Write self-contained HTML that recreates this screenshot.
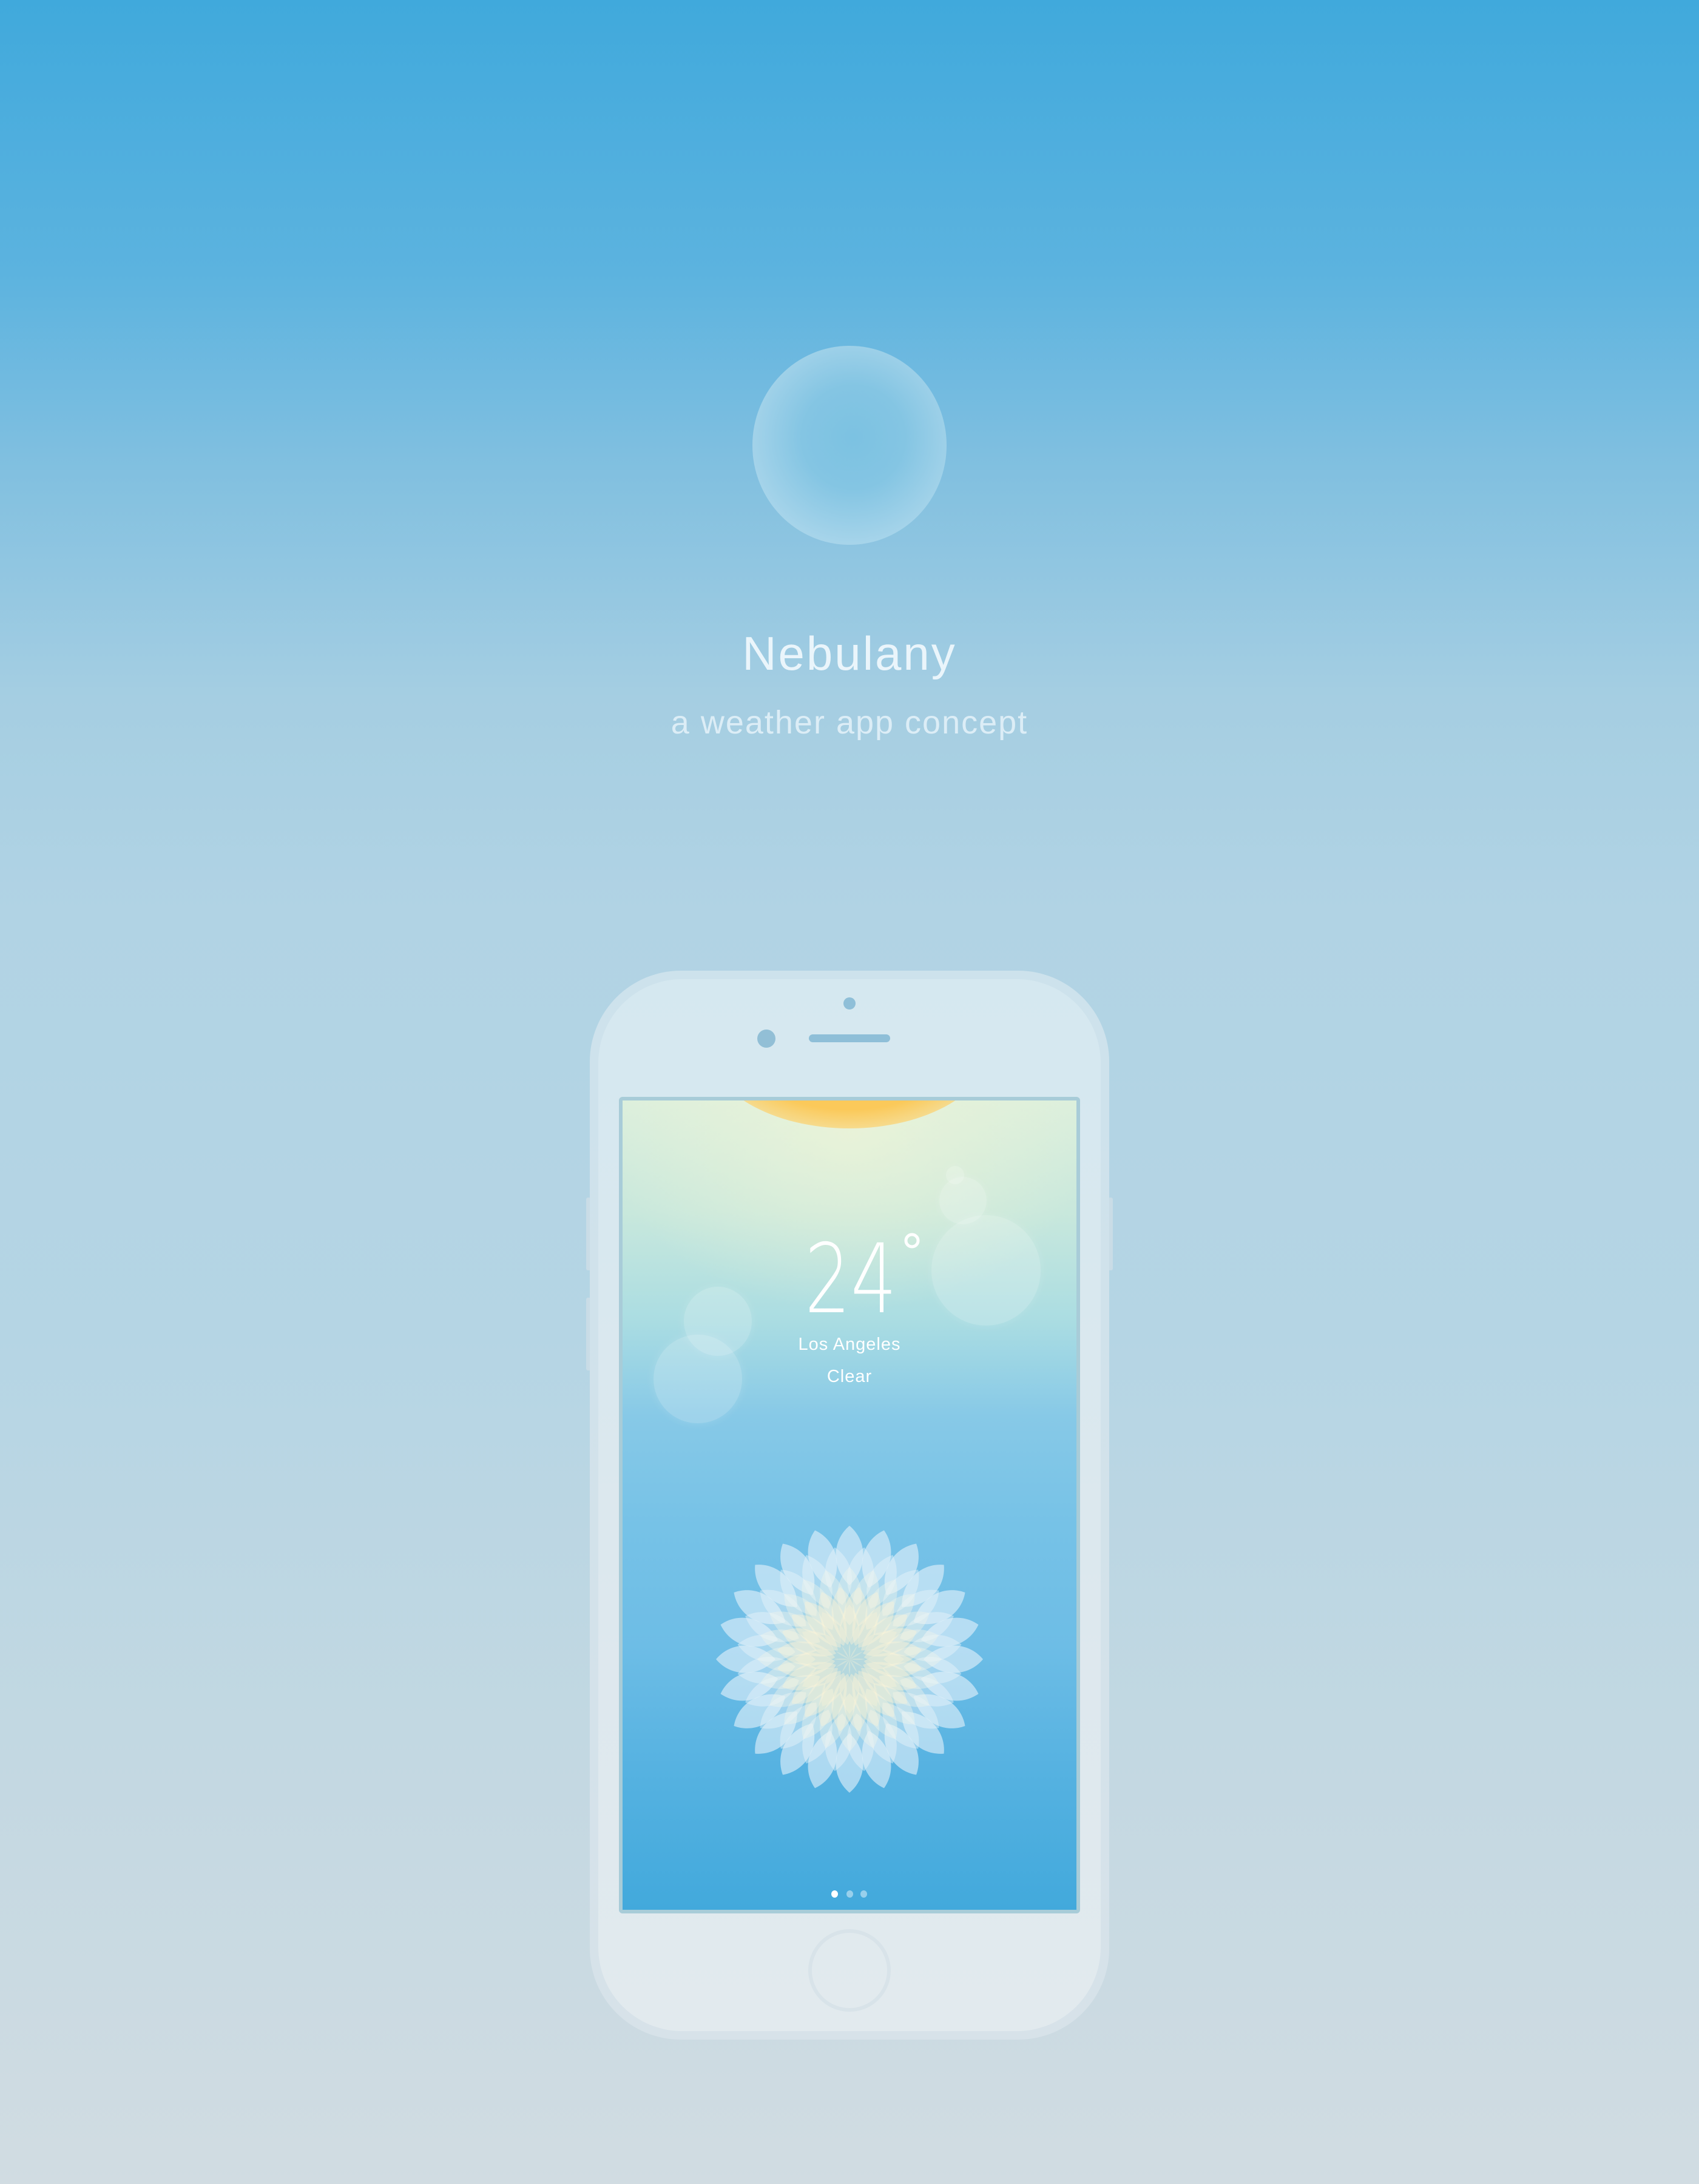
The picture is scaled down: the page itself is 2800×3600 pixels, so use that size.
<!DOCTYPE html>
<html><head><meta charset="utf-8"><style>
html,body{margin:0;padding:0}
body{width:2800px;height:3600px;position:relative;overflow:hidden;
background:linear-gradient(180deg,#40a9dc 0px,#5cb3df 450px,#7fbfe0 750px,#a5cee2 1150px,#b1d3e4 1500px,#b5d5e4 2200px,#c3d8e2 2900px,#d1dce2 3600px);
font-family:"Liberation Sans",sans-serif}
.abs{position:absolute}
.orb{left:1240px;top:570px;width:320px;height:328px;border-radius:50%;
background:radial-gradient(circle at 52% 46%,#7cc2e2 0%,#84c5e3 35%,#a6d4ea 72%,#c6e4f1 100%)}
.t1{left:0;width:2800px;top:1032px;text-align:center;color:#eaf5fb;font-size:78px;letter-spacing:3px}
.t2{left:0;width:2800px;top:1160px;text-align:center;color:#dcedf6;font-size:54px;letter-spacing:2px}
.phone{left:972px;top:1600px;width:856px;height:1762px;border-radius:150px;
background:linear-gradient(180deg,#cde2ec,#d7e2e9)}
.phone2{left:986px;top:1614px;width:828px;height:1734px;border-radius:138px;
background:linear-gradient(180deg,#d5e8f0,#dde8ee 60%,#e2eaee)}
.btn{background:#c9dce6;width:8px;border-radius:3px}
.scr{left:1020px;top:1808px;width:760px;height:1346px;background:#a8ccd8;border-radius:6px}
.scrin{left:1026px;top:1814px;width:748px;height:1334px;overflow:hidden;
background:linear-gradient(180deg,#dcefdc 0px,#c9e8dc 180px,#abdde2 360px,#87c9e7 520px,#76c2e7 700px,#6dbde6 900px,#56b2e1 1100px,#42a9dc 1334px)}
.b{position:absolute;border-radius:50%;background:rgba(255,255,255,0.2);box-shadow:0 0 16px rgba(255,255,255,0.15)}
</style></head><body>
<div class="abs orb"></div>
<div class="abs t1">Nebulany</div>
<div class="abs t2">a weather app concept</div>

<div class="abs btn" style="left:966px;top:1974px;height:120px"></div>
<div class="abs btn" style="left:966px;top:2139px;height:120px"></div>
<div class="abs btn" style="left:1826px;top:1974px;height:120px"></div>
<div class="abs phone"></div>
<div class="abs phone2"></div>
<div class="abs" style="left:1390px;top:1644px;width:20px;height:20px;border-radius:50%;background:#8fbfd8"></div>
<div class="abs" style="left:1248px;top:1697px;width:30px;height:30px;border-radius:50%;background:#92bfd6"></div>
<div class="abs" style="left:1333px;top:1705px;width:134px;height:13px;border-radius:7px;background:#8fbfd8"></div>

<div class="abs scr"></div>
<div class="abs scrin">
  <div class="abs" style="left:-100px;top:-300px;width:948px;height:700px;background:radial-gradient(ellipse at 50% 50%,rgba(240,245,215,0.7),rgba(240,245,215,0) 60%)"></div>
  <div class="abs" style="left:140px;top:-230px;width:468px;height:276px;border-radius:50%;background:radial-gradient(ellipse at 50% 50%,#fbc95a 55%,rgba(252,220,140,0.6) 80%,rgba(252,230,170,0) 100%)"></div>
  <div class="b" style="left:509px;top:189px;width:180px;height:182px"></div>
  <div class="b" style="left:522px;top:126px;width:78px;height:78px"></div>
  <div class="b" style="left:533px;top:108px;width:30px;height:30px"></div>
  <div class="b" style="left:101px;top:307px;width:112px;height:114px"></div>
  <div class="b" style="left:51px;top:386px;width:146px;height:146px"></div>
  <div class="abs" style="left:0;width:748px;top:386px;text-align:center;color:#fff;font-size:29px;letter-spacing:1px">Los Angeles</div>
  <div class="abs" style="left:0;width:748px;top:439px;text-align:center;color:#fff;font-size:29px;letter-spacing:1px">Clear</div>
  <svg class="abs" style="left:0;top:0" width="748" height="1334" viewBox="1026 1814 748 1334">
    <text x="1326" y="2163" font-family="DejaVu Sans, Liberation Sans, sans-serif" font-weight="200" font-size="158" fill="#fff" textLength="152" lengthAdjust="spacingAndGlyphs">24</text>
    <circle cx="1503" cy="2045" r="10" fill="none" stroke="#fff" stroke-width="5"/>
    <defs>
      <path id="p1" d="M0,-122 C30,-150 30,-195 0,-220 C-30,-195 -30,-150 0,-122Z" fill="#e2f1fa" fill-opacity="0.62"/>
      <path id="p2" d="M0,-90 C29,-118 29,-160 0,-186 C-29,-160 -29,-118 0,-90Z" fill="#e8f4fa" fill-opacity="0.45"/>
      <path id="p3" d="M0,-56 C27,-84 27,-126 0,-152 C-27,-126 -27,-84 0,-56Z" fill="#f0f5ec" fill-opacity="0.4"/>
      <path id="p4" d="M0,-24 C26,-52 26,-94 0,-120 C-26,-94 -26,-52 0,-24Z" fill="#fff4d6" fill-opacity="0.4"/>
      <path id="p5" d="M0,0 C22,-25 22,-65 0,-90 C-22,-65 -22,-25 0,0Z" fill="#fff4d6" fill-opacity="0.3"/>
      <g id="ra"><use href="#p1" transform="rotate(0)"/><use href="#p1" transform="rotate(15)"/><use href="#p1" transform="rotate(30)"/><use href="#p1" transform="rotate(45)"/><use href="#p1" transform="rotate(60)"/><use href="#p1" transform="rotate(75)"/><use href="#p1" transform="rotate(90)"/><use href="#p1" transform="rotate(105)"/><use href="#p1" transform="rotate(120)"/><use href="#p1" transform="rotate(135)"/><use href="#p1" transform="rotate(150)"/><use href="#p1" transform="rotate(165)"/><use href="#p1" transform="rotate(180)"/><use href="#p1" transform="rotate(195)"/><use href="#p1" transform="rotate(210)"/><use href="#p1" transform="rotate(225)"/><use href="#p1" transform="rotate(240)"/><use href="#p1" transform="rotate(255)"/><use href="#p1" transform="rotate(270)"/><use href="#p1" transform="rotate(285)"/><use href="#p1" transform="rotate(300)"/><use href="#p1" transform="rotate(315)"/><use href="#p1" transform="rotate(330)"/><use href="#p1" transform="rotate(345)"/></g>
      <g id="rb"><use href="#p2" transform="rotate(7.5)"/><use href="#p2" transform="rotate(22.5)"/><use href="#p2" transform="rotate(37.5)"/><use href="#p2" transform="rotate(52.5)"/><use href="#p2" transform="rotate(67.5)"/><use href="#p2" transform="rotate(82.5)"/><use href="#p2" transform="rotate(97.5)"/><use href="#p2" transform="rotate(112.5)"/><use href="#p2" transform="rotate(127.5)"/><use href="#p2" transform="rotate(142.5)"/><use href="#p2" transform="rotate(157.5)"/><use href="#p2" transform="rotate(172.5)"/><use href="#p2" transform="rotate(187.5)"/><use href="#p2" transform="rotate(202.5)"/><use href="#p2" transform="rotate(217.5)"/><use href="#p2" transform="rotate(232.5)"/><use href="#p2" transform="rotate(247.5)"/><use href="#p2" transform="rotate(262.5)"/><use href="#p2" transform="rotate(277.5)"/><use href="#p2" transform="rotate(292.5)"/><use href="#p2" transform="rotate(307.5)"/><use href="#p2" transform="rotate(322.5)"/><use href="#p2" transform="rotate(337.5)"/><use href="#p2" transform="rotate(352.5)"/></g>
      <g id="rc"><use href="#p3" transform="rotate(0)"/><use href="#p3" transform="rotate(15)"/><use href="#p3" transform="rotate(30)"/><use href="#p3" transform="rotate(45)"/><use href="#p3" transform="rotate(60)"/><use href="#p3" transform="rotate(75)"/><use href="#p3" transform="rotate(90)"/><use href="#p3" transform="rotate(105)"/><use href="#p3" transform="rotate(120)"/><use href="#p3" transform="rotate(135)"/><use href="#p3" transform="rotate(150)"/><use href="#p3" transform="rotate(165)"/><use href="#p3" transform="rotate(180)"/><use href="#p3" transform="rotate(195)"/><use href="#p3" transform="rotate(210)"/><use href="#p3" transform="rotate(225)"/><use href="#p3" transform="rotate(240)"/><use href="#p3" transform="rotate(255)"/><use href="#p3" transform="rotate(270)"/><use href="#p3" transform="rotate(285)"/><use href="#p3" transform="rotate(300)"/><use href="#p3" transform="rotate(315)"/><use href="#p3" transform="rotate(330)"/><use href="#p3" transform="rotate(345)"/></g>
      <g id="rd"><use href="#p4" transform="rotate(7.5)"/><use href="#p4" transform="rotate(22.5)"/><use href="#p4" transform="rotate(37.5)"/><use href="#p4" transform="rotate(52.5)"/><use href="#p4" transform="rotate(67.5)"/><use href="#p4" transform="rotate(82.5)"/><use href="#p4" transform="rotate(97.5)"/><use href="#p4" transform="rotate(112.5)"/><use href="#p4" transform="rotate(127.5)"/><use href="#p4" transform="rotate(142.5)"/><use href="#p4" transform="rotate(157.5)"/><use href="#p4" transform="rotate(172.5)"/><use href="#p4" transform="rotate(187.5)"/><use href="#p4" transform="rotate(202.5)"/><use href="#p4" transform="rotate(217.5)"/><use href="#p4" transform="rotate(232.5)"/><use href="#p4" transform="rotate(247.5)"/><use href="#p4" transform="rotate(262.5)"/><use href="#p4" transform="rotate(277.5)"/><use href="#p4" transform="rotate(292.5)"/><use href="#p4" transform="rotate(307.5)"/><use href="#p4" transform="rotate(322.5)"/><use href="#p4" transform="rotate(337.5)"/><use href="#p4" transform="rotate(352.5)"/></g>
      <g id="re"><use href="#p5" transform="rotate(0)"/><use href="#p5" transform="rotate(30)"/><use href="#p5" transform="rotate(60)"/><use href="#p5" transform="rotate(90)"/><use href="#p5" transform="rotate(120)"/><use href="#p5" transform="rotate(150)"/><use href="#p5" transform="rotate(180)"/><use href="#p5" transform="rotate(210)"/><use href="#p5" transform="rotate(240)"/><use href="#p5" transform="rotate(270)"/><use href="#p5" transform="rotate(300)"/><use href="#p5" transform="rotate(330)"/></g>
    </defs>
    <g transform="translate(1400,2735)">
      <use href="#ra"/><use href="#rb"/><use href="#rc"/><use href="#rd"/><use href="#re"/>
    </g>
  </svg>
  <div class="abs" style="left:344px;top:1302px;width:11px;height:12px;border-radius:50%;background:#fff"></div>
  <div class="abs" style="left:369px;top:1302px;width:11px;height:12px;border-radius:50%;background:rgba(255,255,255,0.45)"></div>
  <div class="abs" style="left:392px;top:1302px;width:11px;height:12px;border-radius:50%;background:rgba(255,255,255,0.45)"></div>
</div>
<div class="abs" style="left:1332px;top:3180px;width:124px;height:124px;border-radius:50%;border:6px solid #d8e3e9"></div>
</body></html>
